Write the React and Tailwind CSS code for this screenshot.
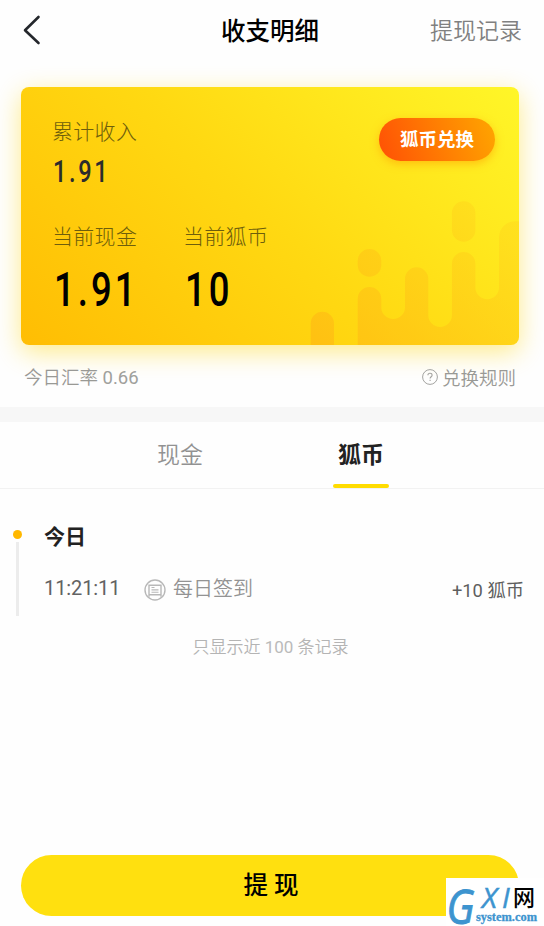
const records = [
  { time: "11:21:11", title: "每日签到", amount: "+10 狐币" },
];

function BackIcon() {
  return (
    <svg width="20" height="32" viewBox="0 0 20 32" fill="none" stroke="#24272c" strokeWidth="2.6" strokeLinecap="round" strokeLinejoin="round">
      <path d="M17.500 3 4 16.200 17.500 29" />
    </svg>
  );
}

function HelpIcon() {
  return (
    <svg width="16" height="16" viewBox="0 0 16 16" fill="none" stroke="#a3a3a0" strokeWidth="1">
      <circle cx="8" cy="8" r="7.4" />
      <path d="M5.900 6.300c0-1.200.9-2 2.100-2s2.100.8 2.100 1.900c0 1.500-2 1.600-2 3.300M8.100 10.800v1.200" strokeWidth="1.1" />
    </svg>
  );
}

function SignInIcon() {
  return (
    <svg width="22" height="22" viewBox="0 0 22 22" fill="none" stroke="#b8b8b8" strokeWidth="1.4">
      <circle cx="11" cy="11" r="10" />
      <path d="M5 17.800V6.300h12v11.500M5 15.800h12" />
      <path d="M7.500 8.500h3M7.500 10.900h7M7.500 13.300h7" strokeWidth="1.1" />
    </svg>
  );
}

function CardBars() {
  return (
    <svg className="absolute right-0 bottom-0" width="209" height="145" viewBox="310 200 209 145">
      <defs>
        <linearGradient id="bars" gradientUnits="userSpaceOnUse" x1="320" y1="345" x2="470" y2="195">
          <stop offset="0" stopColor="#ffb514" stopOpacity="0.6" />
          <stop offset="1" stopColor="#ffc41a" stopOpacity="0.26" />
        </linearGradient>
      </defs>
      <g fill="url(#bars)">
        <path d="M310.700 345V323.400a11.650 11.650 0 0 1 23.300 0V345Z" />
        <rect x="357.700" y="249" width="23.600" height="27.700" rx="11.800" />
        <rect x="451.900" y="201.300" width="23.500" height="40.400" rx="11.750" />
        <path d="M357.700 345V298.800a11.800 11.800 0 0 1 23.600 0V307.200a11.850 11.850 0 0 0 23.700 0V279a11.650 11.650 0 0 1 23.300 0V315.200a11.800 11.800 0 0 0 23.600 0V263.800a11.750 11.750 0 0 1 23.500 0V287.500a11.800 11.800 0 0 0 23.600 0V237.300a16 16 0 0 1 16-16H520V345Z" />
      </g>
    </svg>
  );
}

function BalanceCard() {
  return (
    <section className="relative h-[258px] w-[498px] overflow-hidden rounded-lg bg-[linear-gradient(45deg,#ffbd03_0%,#ffd912_50%,#fff628_100%)] pl-[31px]">
      <CardBars />
      <div className="relative flex justify-between pr-6">
        <div className="pt-[30px]">
          <p className="text-[21px] leading-[30px] font-light tracking-[0.3px] text-[#6e5e0c]">累计收入</p>
          <p className="mt-2 ml-px origin-left scale-x-[0.76] text-[31px] leading-[34px] font-medium tracking-[3.500px] text-[#2c2c2c]">1.91</p>
        </div>
        <button className="mt-[31px] h-[43px] w-[116px] rounded-full bg-[linear-gradient(70deg,#ff5005,#ffa600)] pt-0.5 text-[18.500px] font-bold text-white shadow-[0_3px_8px_rgba(255,150,0,0.5)]">
          狐币兑换
        </button>
      </div>
      <div className="relative mt-[33px] flex">
        <div className="w-[131px]">
          <p className="text-[21px] leading-[30px] font-light tracking-[0.3px] text-[#6e5e0c]">当前现金</p>
          <p className="mt-[13px] ml-0.5 origin-left scale-x-[0.76] text-[48px] leading-[50px] font-medium tracking-[4px] text-black">1.91</p>
        </div>
        <div>
          <p className="text-[21px] leading-[30px] font-light tracking-[0.3px] text-[#6e5e0c]">当前狐币</p>
          <p className="mt-[13px] ml-0.5 origin-left scale-x-[0.76] text-[48px] leading-[50px] font-medium tracking-[4px] text-black">10</p>
        </div>
      </div>
    </section>
  );
}

function Watermark() {
  return (
    <div className="absolute right-0 bottom-0 h-12 w-[98px] bg-white">
      <svg width="98" height="48" viewBox="0 0 98 48" overflow="visible">
        <g fill="#3d94cf">
          <text x="0.500" y="46" fontFamily="Open Sans" fontSize="48" fontStyle="italic" stroke="#3d94cf" strokeWidth="0.9" textLength="28" lengthAdjust="spacingAndGlyphs">G</text>
          <g stroke="#3d94cf" strokeWidth="0.5">
            <text x="36" y="30" fontFamily="Open Sans" fontSize="28" fontStyle="italic" textLength="15" lengthAdjust="spacingAndGlyphs">X</text>
            <text x="56" y="30" fontFamily="Open Sans" fontSize="28" fontStyle="italic">I</text>
          </g>
          <text x="30" y="43" fontFamily="Liberation Serif" fontSize="13" fontWeight="bold" stroke="#3d94cf" strokeWidth="0.3" textLength="61" lengthAdjust="spacingAndGlyphs">system.com</text>
        </g>
        <text x="67" y="28" fontFamily="Noto Sans CJK SC" fontSize="23" fontWeight="500" textLength="22" lengthAdjust="spacingAndGlyphs">网</text>
      </svg>
    </div>
  );
}

export default function App() {
  return (
    <div className="relative flex h-[926px] w-[544px] flex-col overflow-hidden bg-[#fefefe] font-['Roboto','Noto_Sans_CJK_SC',sans-serif]">
      <header className="grid h-[60px] shrink-0 grid-cols-[1fr_auto_1fr] items-center pr-[22px] pl-[21px]">
        <BackIcon />
        <h1 className="-ml-[3px] pt-1 text-[24.500px] font-medium text-black">收支明细</h1>
        <span className="pt-1 text-right text-[23px] font-[350] text-[#808080]">提现记录</span>
      </header>

      <div className="mx-[21px] mt-[27px] w-[498px] shrink-0 rounded-lg shadow-[0_7px_26px_rgba(255,214,0,0.46)]">
        <BalanceCard />
      </div>

      <div className="relative mt-[20px] flex h-6 shrink-0 items-center justify-between pr-[28px] pl-6 text-[18.500px] font-[350] text-[#999995]">
        <span className="pt-1">
          今日汇率 <span className="font-normal text-[#a0a09c]">0.66</span>
        </span>
        <span className="flex items-center gap-1">
          <HelpIcon />
          <span className="pt-[5px]">兑换规则</span>
        </span>
      </div>

      <div className="mt-[18px] h-[15px] shrink-0 bg-[#f7f7f7]" />

      <nav className="flex h-[67px] shrink-0 justify-center gap-[121px] border-b border-[#f2f2f2] pr-[3px] text-[23px]">
        <button className="flex w-[60px] flex-col items-center pt-[18px] leading-8 font-[350] text-[#929292]">现金</button>
        <button className="flex w-[60px] flex-col items-center justify-between pt-[18px] font-bold text-[#222]">
          <span className="leading-8">狐币</span>
          <span className="h-1 w-14 rounded-sm bg-[#ffdc00]" />
        </button>
      </nav>

      <main className="flex shrink-0 pt-[30px] pr-[20px] pl-[13px]">
        <div className="flex w-[31px] flex-col items-start pt-[11px]">
          <span className="size-[9px] rounded-full bg-[#ffb800]" />
          <span className="mt-[3px] ml-[3px] h-[74px] w-[3px] bg-[#ececec]" />
        </div>
        <div className="flex-1">
          <h2 className="pt-px text-[21px] leading-[34px] font-bold text-[#222]">今日</h2>
          {records.map((record) => (
            <div key={record.time} className="mt-5 flex h-8 items-center">
              <span className="w-[100px] pb-1 text-[20px] tracking-[-0.1px] text-[#626262]">{record.time}</span>
              <SignInIcon />
              <span className="ml-[7px] pb-0.5 text-[20px] font-[350] text-[#939393]">{record.title}</span>
              <span className="ml-auto pt-px text-[18.300px] text-[#5e5e5e]">{record.amount}</span>
            </div>
          ))}
        </div>
      </main>

      <p className="mt-[19px] w-[541px] text-center text-[17px] leading-6 font-[350] text-[#b4b4b4]">
        只显示近 <span className="font-normal text-[#bababa]">100</span> 条记录
      </p>

      <button className="mx-[21px] mt-auto mb-[10px] h-[61px] w-[498px] shrink-0 rounded-full bg-[#ffe00f] pt-0.5 pl-0.5 text-[24.500px] font-medium text-black">
        提 现
      </button>
      <Watermark />
    </div>
  );
}
